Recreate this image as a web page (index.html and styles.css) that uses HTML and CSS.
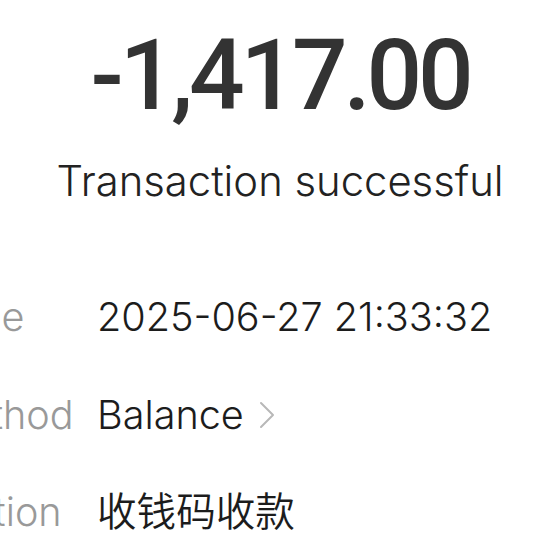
FILE: index.html
```html
<!DOCTYPE html>
<html lang="en">
<head>
    <meta charset="UTF-8">
    <meta name="viewport" content="width=device-width, initial-scale=1.0">
    <title>Transaction Details</title>
    <link rel="stylesheet" href="styles.css">
</head>
<body>
    <div class="summary">
        <div class="amount">-1,417.00</div>
        <div class="status">Transaction successful</div>
    </div>

    <div class="details">
        <div class="row">
            <span class="label">Payment Time</span>
            <span class="value">2025-06-27 21:33:32</span>
        </div>
        <div class="row">
            <span class="label">Payment Method</span>
            <span class="value link">
                <span>Balance</span>
                <svg class="chevron" width="16" height="28" viewBox="0 0 16 28">
                    <path d="M2 2 L14 14 L2 26" fill="none" stroke="#b8b8b8" stroke-width="2" stroke-linecap="round" stroke-linejoin="round"/>
                </svg>
            </span>
        </div>
        <div class="row">
            <span class="label">Item Description</span>
            <span class="value">收钱码收款</span>
        </div>
    </div>
</body>
</html>
```

FILE: styles.css
```css
body {
    margin: 0;
    padding: 0;
    background-color: #ffffff;
    font-family: Inter, "Noto Sans CJK SC", sans-serif;
    overflow: hidden;
}
.summary {
    padding-top: 27px;
    text-align: center;
}
.amount {
    font-family: Roboto, sans-serif;
    font-weight: 500;
    font-size: 98px;
    line-height: 1;
    letter-spacing: -4.2px;
    color: #333333;
}
.status {
    margin-top: 31px;
    font-size: 41.8px;
    font-weight: 350;
    line-height: 1.2;
    color: #222222;
}
.details {
    margin-top: 88px;
    margin-left: -239px;
    display: flex;
    flex-direction: column;
    gap: 50px;
}
.row {
    display: flex;
    align-items: baseline;
    font-size: 39.6px;
    font-weight: 350;
    line-height: 1.2;
}
.label {
    flex: 0 0 336px;
    white-space: nowrap;
    color: #999999;
}
.value {
    color: #1c1c1c;
    white-space: nowrap;
}
.link {
    display: flex;
    align-items: center;
    gap: 15px;
}
.chevron {
    flex: none;
}
```
